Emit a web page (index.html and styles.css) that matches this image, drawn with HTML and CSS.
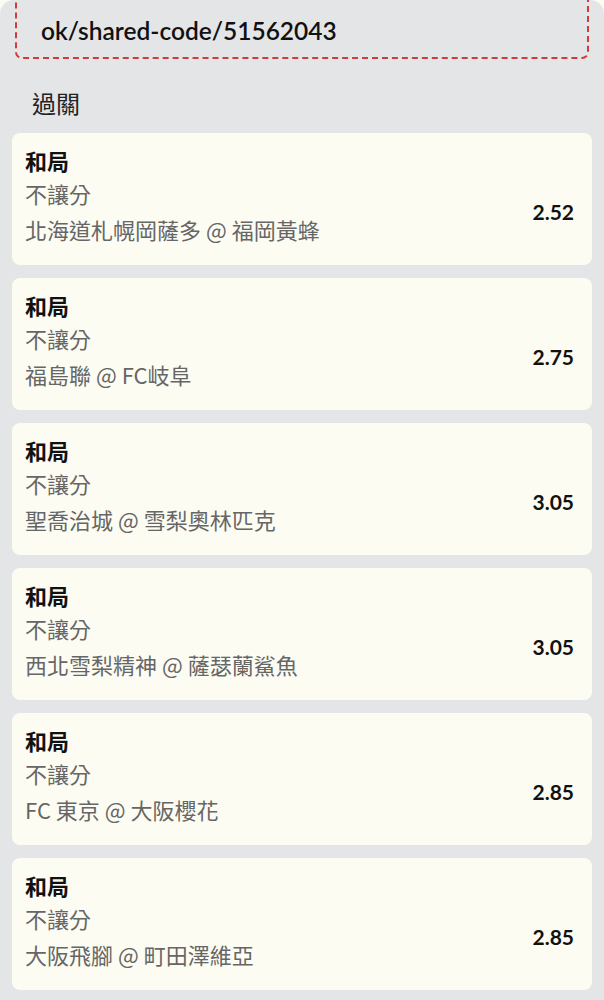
FILE: index.html
```html
<!DOCTYPE html>
<html lang="zh-Hant">
<head>
	<meta charset="UTF-8">
	<title>過關</title>
<link rel="stylesheet" href="styles.css">
</head>
<body>
	<div class="panel">
		<div class="share">
			<div class="share-line prev">https://bet.hkjc.com/ch/betslip/bo</div>
			<div class="share-line">ok/shared-code/51562043</div>
		</div>
		<h2 class="section">過關</h2>
		<ul class="legs">
			<li class="leg">
				<div class="pick">和局</div>
				<div class="leg-row">
					<div class="leg-info">
						<div class="market">不讓分</div>
						<div class="match">北海道札幌岡薩多 @ 福岡黃蜂</div>
					</div>
					<div class="odds">2.52</div>
				</div>
			</li>
			<li class="leg">
				<div class="pick">和局</div>
				<div class="leg-row">
					<div class="leg-info">
						<div class="market">不讓分</div>
						<div class="match">福島聯 @ FC岐阜</div>
					</div>
					<div class="odds">2.75</div>
				</div>
			</li>
			<li class="leg">
				<div class="pick">和局</div>
				<div class="leg-row">
					<div class="leg-info">
						<div class="market">不讓分</div>
						<div class="match">聖喬治城 @ 雪梨奧林匹克</div>
					</div>
					<div class="odds">3.05</div>
				</div>
			</li>
			<li class="leg">
				<div class="pick">和局</div>
				<div class="leg-row">
					<div class="leg-info">
						<div class="market">不讓分</div>
						<div class="match">西北雪梨精神 @ 薩瑟蘭鯊魚</div>
					</div>
					<div class="odds">3.05</div>
				</div>
			</li>
			<li class="leg">
				<div class="pick">和局</div>
				<div class="leg-row">
					<div class="leg-info">
						<div class="market">不讓分</div>
						<div class="match">FC 東京 @ 大阪櫻花</div>
					</div>
					<div class="odds">2.85</div>
				</div>
			</li>
			<li class="leg">
				<div class="pick">和局</div>
				<div class="leg-row">
					<div class="leg-info">
						<div class="market">不讓分</div>
						<div class="match">大阪飛腳 @ 町田澤維亞</div>
					</div>
					<div class="odds">2.85</div>
				</div>
			</li>
		</ul>
	</div>
</body>
</html>
```

FILE: styles.css
```css
html, body {margin: 0; padding: 0;}
body {background: #fbfbf1; font-family: Lato, "Noto Sans CJK TC", sans-serif; color: #111; overflow: hidden;}
.panel {display: flow-root; background: #e4e5e7; border-radius: 14px 14px 0 0; padding: 0 12px 20px; height: 1000px; box-sizing: border-box;}
.share {margin: -30px 3px 0; border: 2px dashed #d23b3b; border-radius: 7px; padding: 0 0 0 24px; height: 89px; box-sizing: border-box; overflow: hidden;}
.share-line {font-size: 24.5px; font-weight: 600; line-height: 30px; white-space: nowrap; overflow: hidden;}
.share-line.prev {margin: -3px 0 17px;}
.section {margin: 0; padding: 28px 0 0 20px; height: 74px; box-sizing: border-box; font-family: "Noto Sans CJK TC", sans-serif; font-size: 24px; font-weight: 400; line-height: 32px; color: #222;}
.legs {list-style: none; margin: 0; padding: 0; display: flex; flex-direction: column; gap: 13px;}
.leg {background: #fcfcf3; border-radius: 8px; padding: 12px 18px 18px 13px; height: 132px; box-sizing: border-box;}
.pick {font-family: "Noto Sans CJK TC", sans-serif; font-size: 22px; font-weight: 700; line-height: 30px; color: #111;}
.leg-row {display: flex; align-items: center; justify-content: space-between;}
.market, .match {font-family: "Noto Sans CJK TC", sans-serif; font-size: 22px; line-height: 36px; color: #666;}
.odds {font-size: 21px; font-weight: 700; color: #111;}
```
